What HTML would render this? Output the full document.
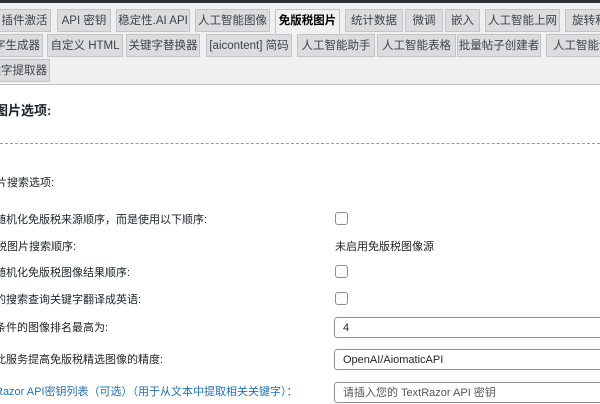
<!DOCTYPE html>
<html><head><meta charset="utf-8"><style>
body{margin:0;width:600px;height:400px;overflow:hidden;background:#fff;font-family:"Liberation Sans","Noto Sans CJK SC",sans-serif;color:#1d2327;position:relative}
.top{position:absolute;left:0;top:0;width:600px;height:84px;background:#f0f0f1;border-bottom:1px solid #c3c4c7}
.bar{position:absolute;left:0;top:0;width:600px;height:3px;background:#2c3338}
.t{position:absolute;height:23px;line-height:23px;background:#dcdcde;border:1px solid #c3c4c7;font-size:11.5px;color:#3c434a;text-align:center;box-sizing:border-box;white-space:nowrap;overflow:hidden}
.t.a{background:#f0f0f1;color:#000;font-weight:bold;border-bottom-color:#f0f0f1}
.l{position:absolute;font-size:11px;white-space:nowrap}
.cb{position:absolute;width:11px;height:11px;border:1px solid #8c8f94;border-radius:3px;background:#fff}
.in{position:absolute;left:334px;width:280px;height:21px;border:1px solid #8c8f94;border-radius:3px;font-size:11px;line-height:21px;padding-left:8px;box-sizing:border-box}
</style></head><body>
<div class="top"><div class="bar"></div>
<div class="t" style="left:-2px;top:9px;width:53px">插件激活</div>
<div class="t" style="left:57px;top:9px;width:54px">API 密钥</div>
<div class="t" style="left:116px;top:9px;width:74px">稳定性.AI API</div>
<div class="t" style="left:195px;top:9px;width:75px">人工智能图像</div>
<div class="t a" style="left:275px;top:9px;width:65px;height:25px">免版税图片</div>
<div class="t" style="left:345px;top:9px;width:58px">统计数据</div>
<div class="t" style="left:405px;top:9px;width:38px">微调</div>
<div class="t" style="left:445px;top:9px;width:35px">嵌入</div>
<div class="t" style="left:485px;top:9px;width:75px">人工智能上网</div>
<div class="t" style="left:565px;top:9px;width:60px;text-align:left;padding-left:6px">旋转和</div>
<div class="t" style="left:-20px;top:34px;width:63px;text-align:right;padding-right:2px">字生成器</div>
<div class="t" style="left:47px;top:34px;width:76px">自定义 HTML</div>
<div class="t" style="left:126px;top:34px;width:74px">关键字替换器</div>
<div class="t" style="left:206px;top:34px;width:86px">[aicontent] 简码</div>
<div class="t" style="left:297px;top:34px;width:78px">人工智能助手</div>
<div class="t" style="left:377px;top:34px;width:79px">人工智能表格</div>
<div class="t" style="left:457px;top:34px;width:84px">批量帖子创建者</div>
<div class="t" style="left:546px;top:34px;width:70px;text-align:left;padding-left:6px">人工智能词</div>
<div class="t" style="left:-20px;top:59px;width:70px;text-align:right;padding-right:2px">键字提取器</div>
</div>
<div class="l" style="left:-5px;top:100px;font-size:13px;font-weight:bold">图片选项:</div>
<div style="position:absolute;left:0;top:143px;width:600px;border-top:1px dashed #999"></div>
<div class="l" style="left:-4px;top:174px">片搜索选项:</div>
<div class="l" style="left:-5px;top:211px">随机化免版税来源顺序，而是使用以下顺序:</div>
<div class="cb" style="left:335px;top:212px"></div>
<div class="l" style="left:-4px;top:238px">税图片搜索顺序:</div>
<div class="l" style="left:335px;top:238px">未启用免版税图像源</div>
<div class="l" style="left:-5px;top:264px">随机化免版税图像结果顺序:</div>
<div class="cb" style="left:335px;top:265px"></div>
<div class="l" style="left:-5px;top:291px">的搜索查询关键字翻译成英语:</div>
<div class="cb" style="left:335px;top:292px"></div>
<div class="l" style="left:-5px;top:319px">条件的图像排名最高为:</div>
<div class="in" style="top:317px">4</div>
<div class="l" style="left:-5px;top:351px">此服务提高免版税精选图像的精度:</div>
<div class="in" style="top:349px">OpenAI/AiomaticAPI</div>
<div class="l" style="left:-5px;top:383px;color:#2271b1">Razor API密钥列表（可选）（用于从文本中提取相关关键字）：</div>
<div class="in" style="top:382px;color:#50575e">请插入您的 TextRazor API 密钥</div>
</body></html>
